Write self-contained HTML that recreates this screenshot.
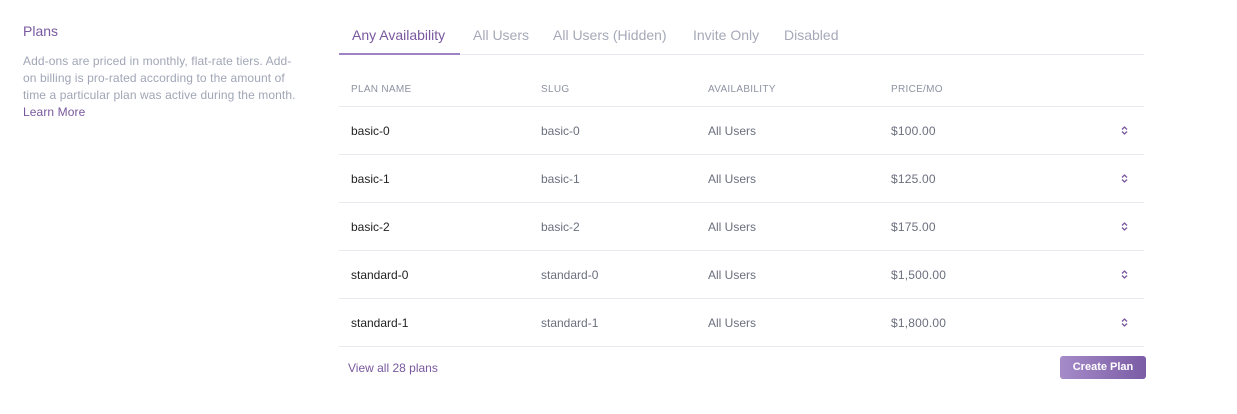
<!DOCTYPE html>
<html><head><style>
body{margin:0;width:1237px;height:414px;background:#fff;font-family:"Liberation Sans",sans-serif;position:relative;overflow:hidden}
.a{position:absolute;white-space:nowrap}
.h{color:#79589f;font-size:14px}
.d{color:#a0a6b6;font-size:12px;line-height:17px;letter-spacing:.1px}
.tab{font-size:14px;color:#a6a9b8;top:27px}
.th{font-size:10px;color:#8e93a3;letter-spacing:.3px;top:84px}
.line{position:absolute;left:339px;width:805px;height:1px;background:#e8eaef}
.c{font-size:12px;color:#6b6f7e}
.n{font-size:12px;color:#222}
</style></head><body>
<div class="a h" style="left:23px;top:23px">Plans</div>
<div class="a d" style="left:23px;top:53px;white-space:normal;width:290px">Add-ons are priced in monthly, flat-rate tiers. Add-<br>on billing is pro-rated according to the amount of<br>time a particular plan was active during the month.<br><span style="color:#79589f">Learn More</span></div>
<div class="a tab" style="left:352px;color:#79589f">Any Availability</div>
<div class="a tab" style="left:473px">All Users</div>
<div class="a tab" style="left:553px">All Users (Hidden)</div>
<div class="a tab" style="left:693px">Invite Only</div>
<div class="a tab" style="left:784px">Disabled</div>
<div class="line" style="top:54px"></div>
<div class="a" style="left:339px;top:53px;width:121px;height:2px;background:#9e84c4"></div>
<div class="a th" style="left:351px">PLAN NAME</div>
<div class="a th" style="left:541px">SLUG</div>
<div class="a th" style="left:708px">AVAILABILITY</div>
<div class="a th" style="left:891px">PRICE/MO</div>
<div class="line" style="top:106px"></div>
<div id="rows"></div>
<script>
var r=[["basic-0","$100.00"],["basic-1","$125.00"],["basic-2","$175.00"],["standard-0","$1,500.00"],["standard-1","$1,800.00"]],h="";
r.forEach(function(x,i){var y=107+48*i;
h+='<div class="a n" style="left:351px;top:'+(y+17)+'px">'+x[0]+'</div><div class="a c" style="left:541px;top:'+(y+17)+'px">'+x[0]+'</div><div class="a c" style="left:708px;top:'+(y+17)+'px">All Users</div><div class="a c" style="left:891px;top:'+(y+17)+'px;letter-spacing:.2px">'+x[1]+'</div>'+
'<svg class="a" style="left:1120px;top:'+(y+18)+'px" width="9" height="11" viewBox="0 0 9 11"><path d="M2 4.5L4.5 2L7 4.5M2 6.5L4.5 9L7 6.5" fill="none" stroke="#79589f" stroke-width="1.3"/></svg>'+
'<div class="line" style="top:'+(y+47)+'px"></div>';});
document.getElementById("rows").innerHTML=h;
</script>
<div class="a" style="left:348px;top:361px;font-size:12px;color:#79589f">View all 28 plans</div>
<div class="a" style="left:1060px;top:356px;width:86px;height:23px;border-radius:3px;background:linear-gradient(90deg,#a58bc8,#7b5ca5);color:#fff;font-size:11px;font-weight:bold;text-align:center;line-height:23px">Create Plan</div>
</body></html>
